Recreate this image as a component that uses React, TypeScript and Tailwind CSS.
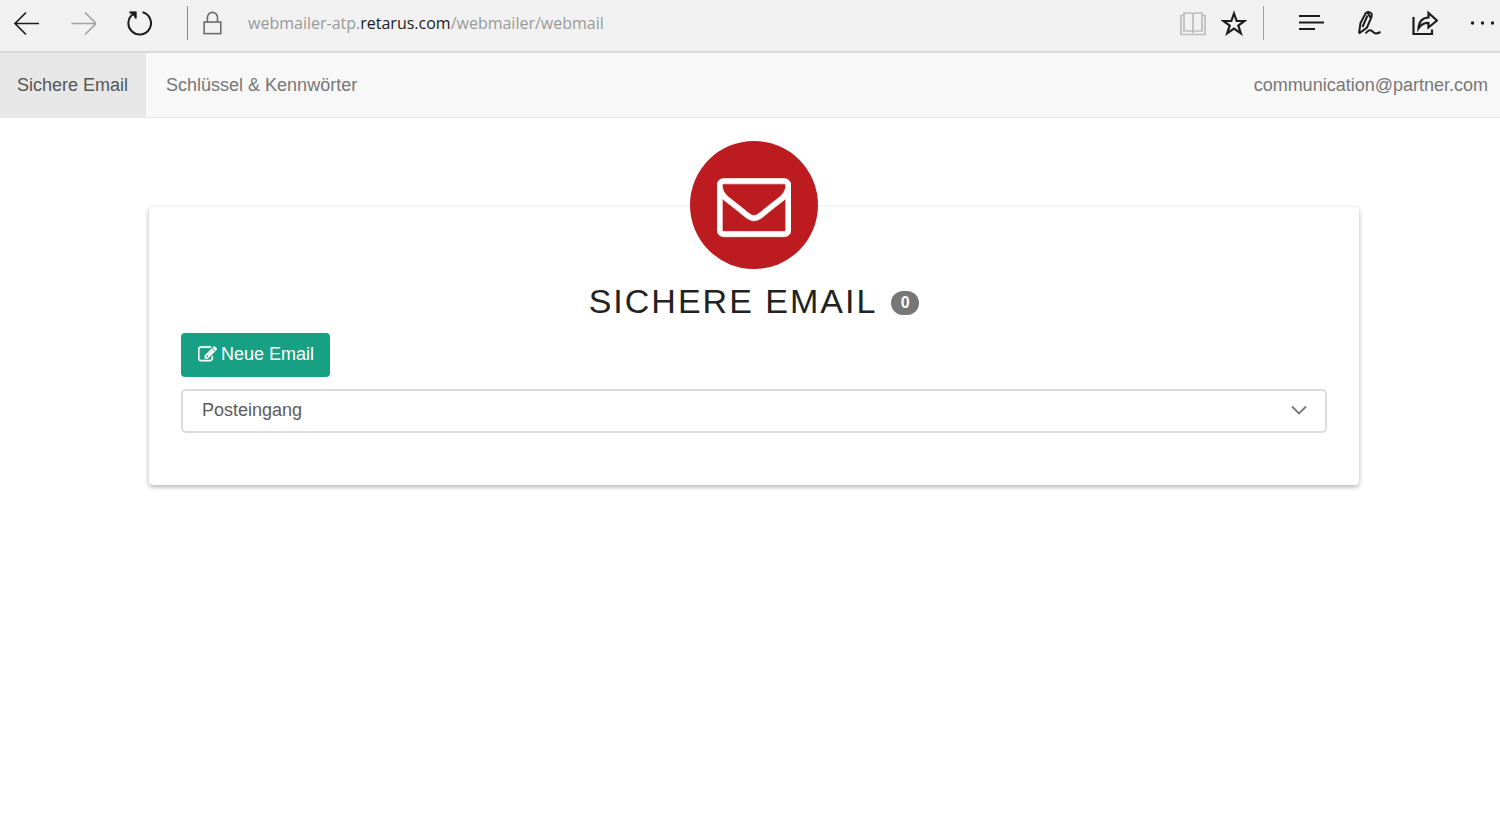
import React from "react";

type IconProps = { children: React.ReactNode; className?: string };

function LineIcon({ children, className = "" }: IconProps) {
  return (
    <svg
      viewBox="0 0 26 26"
      className={`size-[26px] ${className}`}
      fill="none"
      stroke="currentColor"
      strokeWidth="1.7"
      aria-hidden="true"
    >
      {children}
    </svg>
  );
}

function BarButton({ label, className = "", children }: IconProps & { label: string }) {
  return (
    <button type="button" aria-label={label} className={`shrink-0 ${className}`}>
      <LineIcon>{children}</LineIcon>
    </button>
  );
}

function BrowserBar() {
  return (
    <header className="flex h-[53px] items-center border-b-2 border-[#d9d9d9] bg-[#f1f1f1] pr-[5px] pb-[5px] pl-[13px] text-[#1c1c1c]">
      <div className="flex items-center gap-[31px]">
        <BarButton label="Zurück">
          <path d="M26 13.500H2M13 2.500L2 13.500L13 24.500" />
        </BarButton>
        <BarButton label="Vorwärts" className="text-[#a3a3a3]">
          <path d="M1.500 13.500H26M15 2.500L26 13.500L15 24.500" />
        </BarButton>
        <BarButton label="Aktualisieren">
          <path d="M7 3.500A11.300 11.300 0 1 0 15.500 2.300" strokeWidth="2" />
          <path d="M2.500 2.500H8.500V8.500" strokeWidth="2" />
          <path d="M4.500 2.500H8.500V6.500Z" fill="currentColor" />
        </BarButton>
      </div>
      <div className="mr-3 ml-[34px] h-[34px] w-px bg-[#8a8a8a]" />
      <LineIcon className="w-6 text-[#6a6a6a]">
        <rect x="4.500" y="12" width="18" height="12.500" />
        <path d="M8 12V7A5.500 5.500 0 0 1 19 7V12" />
      </LineIcon>
      <p className="ml-6 flex-1 font-['Open_Sans',sans-serif] text-[16px] leading-6 text-[#999]">
        webmailer-atp.<span className="text-[#1c1c1c]">retarus.com</span>/webmailer/webmail
      </p>
      <div className="flex items-center gap-[15px]">
        <BarButton label="Leseansicht" className="text-[#bdbdbd]">
          <path d="M4 3H10.500Q13 3 13 5Q13 3 15.500 3H22V21H15.500Q13 21 13 23Q13 21 10.500 21H4ZM13 5V23" />
          <path d="M4 5.500H1V24.500H25V5.500H22" />
        </BarButton>
        <BarButton label="Zu Favoriten hinzufügen">
          <path d="M13 3.500L15.700 11H23.500L17.300 15.700L19.800 23.300L13 18.700L6.200 23.300L8.700 15.700L2.500 11H10.300Z" strokeWidth="2.200" />
        </BarButton>
      </div>
      <div className="mr-[34px] ml-4 h-[34px] w-px bg-[#a0a0a0]" />
      <div className="flex items-center gap-[31px]">
        <BarButton label="Hub">
          <path d="M1 6H22M1 12.500H26.500M1 19H17" strokeWidth="2" />
        </BarButton>
        <BarButton label="Webseitennotiz">
          <path
            d="M4 23.500L5.500 13L10.500 3.500Q13 0.500 16.500 3.500Q17 5 16.500 7L12 17.500L4 23.500M12.500 2.500L15.500 7.500M12.500 5.500L7.500 17"
            strokeWidth="2"
          />
          <path d="M10.500 23.500Q14.500 18.500 17 21T21 23.500T25.500 22" strokeWidth="2" />
        </BarButton>
        <BarButton label="Freigeben">
          <path d="M1.500 7V24H20V19.500" strokeWidth="2.200" />
          <path d="M6.500 18.500Q7 8 16.500 7.500V3L25 10.500L16.500 17.500V13Q10.500 12.500 6.500 18.500Z" strokeWidth="2.200" />
        </BarButton>
        <BarButton label="Weitere Aktionen">
          <g fill="currentColor" stroke="none">
            <circle cx="3.500" cy="13" r="1.700" />
            <circle cx="13.500" cy="13" r="1.700" />
            <circle cx="23.500" cy="13" r="1.700" />
          </g>
        </BarButton>
      </div>
    </header>
  );
}

function MainNav() {
  return (
    <nav className="flex h-[65px] border-b border-[#e7e7e7] bg-[#f8f8f8] text-[18px] text-[#777]">
      <a href="#mail" aria-current="page" className="flex items-center bg-[#e7e7e7] pr-[18px] pl-[17px] text-[#555]">
        Sichere Email
      </a>
      <a href="#keys" className="flex items-center px-5">
        Schlüssel &amp; Kennwörter
      </a>
      <a href="#account" className="ml-auto flex items-center pr-3">
        communication@partner.com
      </a>
    </nav>
  );
}

function EnvelopeIcon() {
  return (
    <svg viewBox="0 0 1792 1792" className="size-[74px]" fill="currentColor" stroke="currentColor" strokeWidth="16" aria-hidden="true">
      <path d="M1664 1504v-768q-32 36-69 66-268 206-426 338-51 43-83 67t-86.500 48.500-102.500 24.500h-2q-48 0-102.500-24.500t-86.500-48.500-83-67q-158-132-426-338-37-30-69-66v768q0 13 9.500 22.500t22.500 9.500h1472q13 0 22.500-9.500t9.500-22.500zm0-1051v-24.500l-.5-13-3-12.500-5.500-9-9-7.500-14-2.500h-1472q-13 0-22.500 9.500t-9.500 22.500q0 168 147 284 193 152 401 317 6 5 35 29.500t46 37.500 44.500 31.500 50.500 27.500 43 9h2q20 0 43-9t50.500-27.500 44.500-31.500 46-37.500 35-29.500q208-165 401-317 54-43 100.500-115.500t46.500-131.500zm128-37v1088q0 66-47 113t-113 47h-1472q-66 0-113-47t-47-113v-1088q0-66 47-113t113-47h1472q66 0 113 47t47 113z" />
    </svg>
  );
}

function ComposeIcon() {
  return (
    <svg viewBox="0 0 1792 1792" className="size-[19px]" fill="currentColor" stroke="currentColor" strokeWidth="40" aria-hidden="true">
      <path d="M888 1184l116-116-152-152-116 116v56h96v96h56zm440-720q-16-16-33 1l-350 350q-17 17-1 33t33-1l350-350q17-17 1-33zm80 594v190q0 119-84.500 203.500t-203.500 84.500h-832q-119 0-203.500-84.500t-84.500-203.500v-832q0-119 84.500-203.500t203.500-84.500h832q63 0 117 25 15 7 18 23 3 17-9 29l-49 49q-14 14-32 8-23-6-45-6h-832q-66 0-113 47t-47 113v832q0 66 47 113t113 47h832q66 0 113-47t47-113v-126q0-13 9-22l64-64q15-15 35-7t20 29zm-96-738l288 288-672 672h-288v-288zm444 132l-92 92-288-288 92-92q28-28 68-28t68 28l152 152q28 28 28 68t-28 68z" />
    </svg>
  );
}

function MailCard() {
  return (
    <section className="flow-root rounded bg-white px-8 pb-[52px] shadow-[0_2px_5px_rgba(0,0,0,0.3)]">
      <div className="mx-auto -mt-[66px] flex size-32 items-center justify-center rounded-full bg-[#bc1c20] text-white">
        <EnvelopeIcon />
      </div>
      <div className="mt-3 flex items-center justify-center gap-[14px]">
        <h1 className="text-[34px] leading-10 tracking-[2px] text-[#222] uppercase">Sichere Email</h1>
        <span className="mt-1 flex h-6 w-7 items-center justify-center rounded-full bg-[#777] text-[16px] font-bold text-white">
          0
        </span>
      </div>
      <button
        type="button"
        className="mt-3 flex h-11 items-center gap-1 rounded bg-[#18a085] pr-4 pb-[2px] pl-[17px] text-[18px] text-white"
      >
        <ComposeIcon />
        Neue Email
      </button>
      <div className="relative mt-3">
        <select
          aria-label="Ordner"
          className="h-11 w-full appearance-none rounded-[5px] border-2 border-[#dcdcdc] bg-white px-[19px] pb-[2px] text-[18px] text-[#5c5c5c]"
        >
          <option>Posteingang</option>
        </select>
        <svg
          viewBox="0 0 16 10"
          className="pointer-events-none absolute top-4 right-5 h-[10px] w-4"
          fill="none"
          stroke="#777"
          strokeWidth="1.800"
          aria-hidden="true"
        >
          <path d="M1 1.500L8 8.500L15 1.500" />
        </svg>
      </div>
    </section>
  );
}

export default function App() {
  return (
    <div className="min-h-screen bg-white font-['Liberation_Sans',Arial,sans-serif]">
      <BrowserBar />
      <MainNav />
      <main className="pt-[89px] pr-[141px] pb-10 pl-[149px]">
        <MailCard />
      </main>
    </div>
  );
}
